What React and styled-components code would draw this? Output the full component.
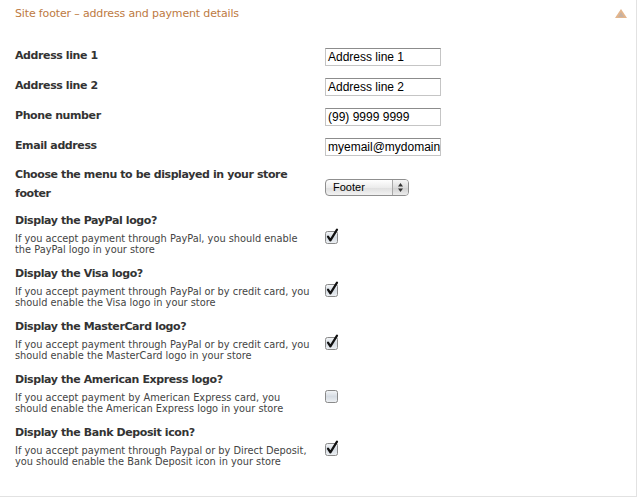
import React from "react";
import styled, { createGlobalStyle } from "styled-components";

const Global = createGlobalStyle`
  html, body { margin: 0; padding: 0; background: #fff; }
  body { font-family: "DejaVu Sans", "Liberation Sans", sans-serif; }
`;

const Panel = styled.div`
  width: 636px;
  height: 496px;
  border-right: 1px solid #e2e2e2;
  border-bottom: 1px solid #e2e2e2;
  box-sizing: content-box;
  background: #fff;
`;

const Header = styled.div`
  display: flex;
  align-items: center;
  justify-content: space-between;
  height: 27px;
  padding: 0 9px 0 15px;
`;

const Title = styled.div`
  font-size: 11px;
  color: #bd7a3f;
  letter-spacing: -0.15px;
`;

const Body = styled.div`
  display: flex;
  flex-direction: column;
  padding: 13px 0 0 15px;
`;

const FieldRow = styled.div`
  display: grid;
  grid-template-columns: 310px auto;
  align-items: center;
  height: ${(p) => p.h || 30}px;
`;

const Label = styled.div`
  font-size: 11px;
  letter-spacing: -0.4px;
  font-weight: bold;
  color: #333;
  line-height: 19px;
`;

const TextInput = styled.div`
  width: 116px;
  height: 18px;
  box-sizing: border-box;
  border: 1px solid #c5c5c5;
  border-top-color: #8c8c8c;
  padding: 0 2px;
  font-family: "Liberation Sans", sans-serif;
  font-size: 12px;
  line-height: 16px;
  color: #000;
  white-space: nowrap;
  overflow: hidden;
  margin-top: 4px;
`;

const SelectBox = styled.div`
  display: flex;
  width: 84px;
  height: 17px;
  box-sizing: border-box;
  border: 1px solid #8f8f8f;
  border-radius: 4px;
  background: linear-gradient(#ffffff, #ececec 50%, #dedede 51%, #f2f2f2);
  overflow: hidden;
  margin-top: 7px;
`;

const SelectText = styled.div`
  flex: 1;
  font-family: "Liberation Sans", sans-serif;
  font-size: 11px;
  line-height: 15px;
  padding-left: 7px;
  color: #000;
`;

const SelectArrows = styled.div`
  width: 15px;
  border-left: 1px solid #a8a8a8;
  display: flex;
  align-items: center;
  justify-content: center;
  background: linear-gradient(#f6f6f6, #dcdcdc 50%, #cfcfcf 51%, #ececec);
`;

const Spacer = styled.div`
  height: 5px;
`;

const CheckRow = styled.div`
  display: grid;
  grid-template-columns: 310px auto;
  align-items: start;
  height: 53px;
`;

const CheckText = styled.div`
  display: flex;
  flex-direction: column;
`;

const CheckTitle = styled.div`
  font-size: 11px;
  letter-spacing: -0.4px;
  font-weight: bold;
  color: #333;
  line-height: 16px;
`;

const CheckDesc = styled.div`
  font-size: 9.8px;
  color: #444;
  line-height: 11px;
  margin-top: 4px;
`;

const CheckWrap = styled.div`
  margin-top: 15px;
  width: 14px;
  height: 16px;
`;

function Checkbox({ checked }) {
  return (
    <CheckWrap>
      <svg width="14" height="16" viewBox="0 0 14 16">
        <defs>
          <linearGradient id="cbg" x1="0" y1="0" x2="0" y2="1">
            <stop offset="0" stopColor="#f4f6f8" />
            <stop offset="0.5" stopColor="#d6dce3" />
            <stop offset="1" stopColor="#eef1f4" />
          </linearGradient>
        </defs>
        <rect x="0.5" y="3.5" width="12" height="12" rx="2" fill="url(#cbg)" stroke="#8a8a8a" />
        {checked && (
          <path d="M3 8.6 L5.4 12.4 L12 1.6" fill="none" stroke="#111" strokeWidth="2.2" strokeLinejoin="round" strokeLinecap="round" />
        )}
      </svg>
    </CheckWrap>
  );
}

const fields = [
  { label: "Address line 1", value: "Address line 1" },
  { label: "Address line 2", value: "Address line 2" },
  { label: "Phone number", value: "(99) 9999 9999" },
  { label: "Email address", value: "myemail@mydomain.com" },
];

const checks = [
  {
    title: "Display the PayPal logo?",
    lines: ["If you accept payment through PayPal, you should enable", "the PayPal logo in your store"],
    checked: true,
  },
  {
    title: "Display the Visa logo?",
    lines: ["If you accept payment through PayPal or by credit card, you", "should enable the Visa logo in your store"],
    checked: true,
  },
  {
    title: "Display the MasterCard logo?",
    lines: ["If you accept payment through PayPal or by credit card, you", "should enable the MasterCard logo in your store"],
    checked: true,
  },
  {
    title: "Display the American Express logo?",
    lines: ["If you accept payment by American Express card, you", "should enable the American Express logo in your store"],
    checked: false,
  },
  {
    title: "Display the Bank Deposit icon?",
    lines: ["If you accept payment through Paypal or by Direct Deposit,", "you should enable the Bank Deposit icon in your store"],
    checked: true,
  },
];

export default function App() {
  return (
    <>
      <Global />
      <Panel>
        <Header>
          <Title>Site footer – address and payment details</Title>
          <svg width="12" height="9" viewBox="0 0 12 9">
            <polygon points="6,0 12,9 0,9" fill="#e3b58c" />
            <polygon points="6,3 9,8 3,8" fill="#c6b1a2" />
          </svg>
        </Header>
        <Body>
          {fields.map((f) => (
            <FieldRow key={f.label}>
              <Label>{f.label}</Label>
              <TextInput>{f.value}</TextInput>
            </FieldRow>
          ))}
          <FieldRow h={48}>
            <Label>
              Choose the menu to be displayed in your store
              <br />
              footer
            </Label>
            <SelectBox>
              <SelectText>Footer</SelectText>
              <SelectArrows>
                <svg width="7" height="11" viewBox="0 0 7 11">
                  <polygon points="3.5,1 6,4.5 1,4.5" fill="#333" />
                  <polygon points="3.5,10 6,6.5 1,6.5" fill="#333" />
                </svg>
              </SelectArrows>
            </SelectBox>
          </FieldRow>
          <Spacer />
          {checks.map((c) => (
            <CheckRow key={c.title}>
              <CheckText>
                <CheckTitle>{c.title}</CheckTitle>
                <CheckDesc>
                  {c.lines[0]}
                  <br />
                  {c.lines[1]}
                </CheckDesc>
              </CheckText>
              <Checkbox checked={c.checked} />
            </CheckRow>
          ))}
        </Body>
      </Panel>
    </>
  );
}
